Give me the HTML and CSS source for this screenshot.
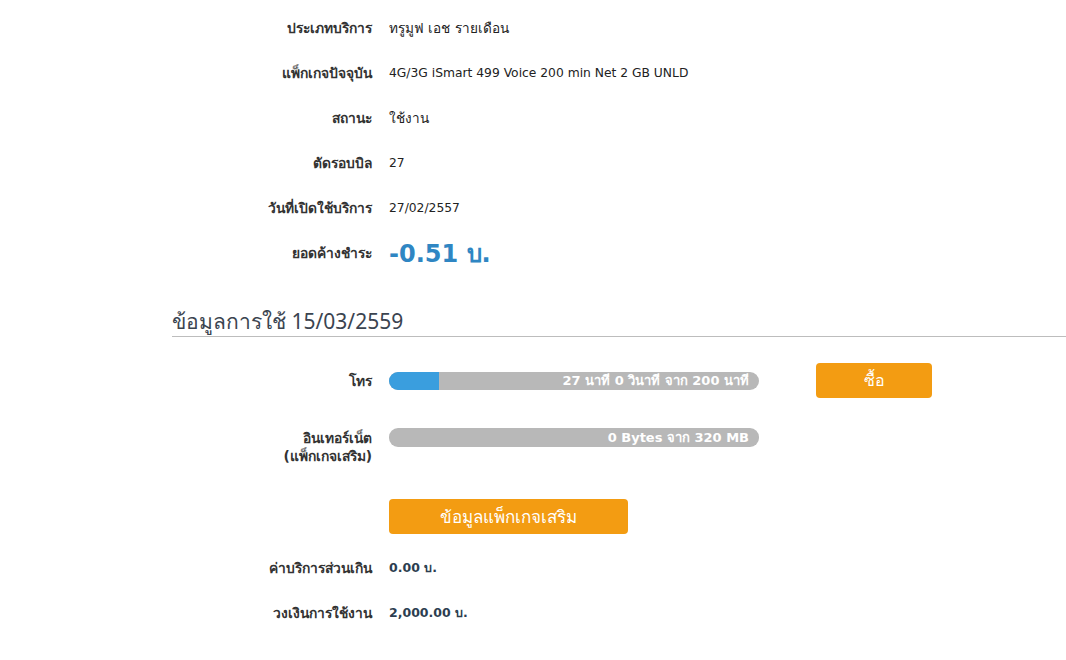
FILE: index.html
```html
<!DOCTYPE html>
<html lang="th">
<head>
<meta charset="utf-8">
<link rel="stylesheet" href="styles.css">
</head>
<body>
<div class="page">
  <div class="info">
    <div class="row"><div class="label">ประเภทบริการ</div><div class="value th">ทรูมูฟ เอช รายเดือน</div></div>
    <div class="row"><div class="label">แพ็กเกจปัจจุบัน</div><div class="value">4G/3G iSmart 499 Voice 200 min Net 2 GB UNLD</div></div>
    <div class="row"><div class="label">สถานะ</div><div class="value th">ใช้งาน</div></div>
    <div class="row"><div class="label">ตัดรอบบิล</div><div class="value">27</div></div>
    <div class="row"><div class="label">วันที่เปิดใช้บริการ</div><div class="value">27/02/2557</div></div>
    <div class="row"><div class="label">ยอดค้างชำระ</div><div class="value balance">-0.51 บ.</div></div>
  </div>

  <h2 class="section-title">ข้อมูลการใช้ 15/03/2559</h2>

  <div class="usage">
    <div class="urow call">
      <div class="label">โทร</div>
      <div class="bar"><div class="fill" style="width:13.5%"></div><span class="bar-text">27 นาที 0 วินาที จาก 200 นาที</span></div>
      <button class="btn buy">ซื้อ</button>
    </div>
    <div class="urow net">
      <div class="label">อินเทอร์เน็ต<br>(แพ็กเกจเสริม)</div>
      <div class="bar"><span class="bar-text">0 Bytes จาก 320 MB</span></div>
    </div>
    <div class="urow btnrow">
      <div class="label"></div>
      <button class="btn addon">ข้อมูลแพ็กเกจเสริม</button>
    </div>
    <div class="row"><div class="label">ค่าบริการส่วนเกิน</div><div class="value money">0.00 บ.</div></div>
    <div class="row"><div class="label">วงเงินการใช้งาน</div><div class="value money">2,000.00 บ.</div></div>
  </div>
</div>
</body>
</html>
```
FILE: styles.css
```css
html, body {
  margin: 0;
  padding: 0;
  background: #fff;
}
body {
  font-family: "DejaVu Sans", Tahoma, sans-serif;
  font-size: 12.3px;
  color: #222;
}
.page {
  padding-top: 18px;
  padding-left: 172px;
}
.info {
  display: flex;
  flex-direction: column;
  gap: 25px;
}
.row {
  display: flex;
  align-items: center;
  height: 20px;
}
.label {
  width: 200px;
  text-align: right;
  font-weight: bold;
  color: #333;
  font-size: 13.8px;
  flex: none;
}
.value {
  margin-left: 17px;
  color: #222;
}
.value.th {
  font-size: 13.6px;
}
.balance {
  font-size: 24px;
  font-weight: bold;
  color: #2f86c3;
}
.section-title {
  margin: 44px 0 0 0;
  font-family: "Noto Sans", "Liberation Sans", sans-serif;
  font-weight: normal;
  font-size: 21px;
  color: #3b4450;
  line-height: 28px;
  padding-bottom: 1px;
  border-bottom: 1px solid #bdbdbd;
}
.usage {
  padding-top: 26px;
  display: flex;
  flex-direction: column;
}
.urow {
  display: flex;
  align-items: center;
}
.bar {
  position: relative;
  margin-left: 17px;
  width: 370px;
  height: 18px;
  background: #b8b8b8;
  border-radius: 9px;
  overflow: hidden;
}
.fill {
  height: 100%;
  background: #3a9ede;
}
.bar-text {
  position: absolute;
  right: 10px;
  top: 0;
  line-height: 18px;
  color: #fff;
  font-weight: bold;
  font-size: 13px;
}
.btn {
  border: none;
  background: #f39c12;
  color: #fff;
  border-radius: 4px;
  font-family: "Noto Sans", sans-serif;
  cursor: pointer;
  padding: 0;
}
.buy {
  margin-left: 57px;
  width: 116px;
  height: 35px;
  font-size: 16px;
}
.net {
  margin-top: 30px;
  align-items: flex-start;
}
.net .label {
  line-height: 18px;
  margin-top: 1px;
}
.net .bar {
  height: 19px;
}
.net .bar-text {
  line-height: 19px;
}
.btnrow {
  margin-top: 34px;
}
.addon {
  margin-left: 17px;
  width: 239px;
  height: 35px;
  font-size: 17px;
}
.usage .row {
  margin-top: 24px;
}
.usage .row + .row {
  margin-top: 25px;
}
.money {
  font-weight: bold;
  color: #2c3e50;
  font-size: 12.5px;
}
```
